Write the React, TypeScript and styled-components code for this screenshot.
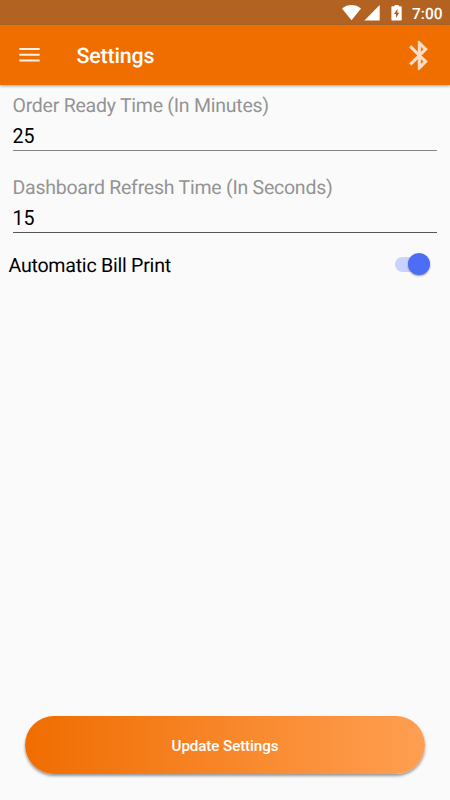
import React, { useState } from "react";
import styled, { createGlobalStyle } from "styled-components";

const GlobalStyle = createGlobalStyle`
  * { box-sizing: border-box; }
  body { margin: 0; background: #fafafa; font-family: Roboto, sans-serif; text-rendering: geometricPrecision; }
`;

const Screen = styled.div`
  display: flex;
  flex-direction: column;
  width: 450px;
  height: 800px;
  background: #fafafa;
  overflow: hidden;
`;

const StatusBar = styled.div`
  display: flex;
  align-items: center;
  flex: none;
  height: 25px;
  padding-left: 342px;
  background: #b26322;
  svg { display: block; flex: none; }
`;

const Clock = styled.span`
  margin-left: 10px;
  padding-top: 2px;
  color: #fff;
  font-size: 15.5px;
  font-weight: 500;
  line-height: 20px;
  white-space: nowrap;
`;

const AppBar = styled.header`
  display: flex;
  align-items: center;
  flex: none;
  height: 60px;
  padding: 0 13px 0 19px;
  background: #f06d00;
  box-shadow: 0 1px 3px rgba(50, 90, 100, 0.5);
`;

const IconButton = styled.button`
  display: flex;
  padding: 0;
  border: 0;
  background: none;
`;

const Title = styled.h1`
  flex: 1;
  margin: 3px 0 0 36.5px;
  color: #fff;
  font-size: 21.4px;
  font-weight: 500;
  letter-spacing: -0.15px;
  line-height: 28px;
`;

const Form = styled.main`
  flex: 1;
  padding: 8px 13px 0 12.5px;
`;

const Field = styled.label`
  display: flex;
  flex-direction: column;
  height: 82px;
`;

const FieldLabel = styled.span`
  padding-top: 1px;
  color: #949494;
  font-size: 19.5px;
  letter-spacing: -0.24px;
  line-height: 23px;
`;

const FieldInput = styled.input<{ $line: string }>`
  height: 34px;
  padding: 6px 0 0;
  border: 0;
  border-bottom: 1px solid ${(p) => p.$line};
  outline: 0;
  background: none;
  color: #000;
  font: 19.6px/27px Roboto, sans-serif;
  letter-spacing: -0.1px;
`;

const SwitchRow = styled.div`
  display: flex;
  align-items: center;
  justify-content: space-between;
  height: 30px;
  margin: -8px 7px 0 -4px;
  color: #000;
  font-size: 19.6px;
  letter-spacing: -0.25px;
`;

const SwitchLabel = styled.span`
  padding-top: 2px;
`;

const Track = styled.button<{ $on: boolean }>`
  display: flex;
  align-items: center;
  justify-content: ${(p) => (p.$on ? "flex-end" : "flex-start")};
  width: 35px;
  height: 15px;
  padding: 0;
  border: 0;
  border-radius: 8px;
  background: ${(p) => (p.$on ? "#c9d2fd" : "#bdbdbd")};
`;

const Thumb = styled.span<{ $on: boolean }>`
  flex: none;
  width: 22px;
  height: 22px;
  border-radius: 50%;
  background: ${(p) => (p.$on ? "#4d6df5" : "#fff")};
  box-shadow: 0 1px 2px rgba(0, 0, 0, 0.4);
`;

const UpdateButton = styled.button`
  flex: none;
  height: 58px;
  margin: 0 25px 26px;
  padding: 2px 0 0;
  border: 0;
  border-radius: 29px;
  background: linear-gradient(90deg, #f06d00, #ff9f52);
  box-shadow: 0 2px 3px rgba(0, 0, 0, 0.4);
  color: #fff;
  font: 500 15.2px/20px Roboto, sans-serif;
  letter-spacing: -0.1px;
`;

export default function App() {
  const [orderTime, setOrderTime] = useState("25");
  const [refreshTime, setRefreshTime] = useState("15");
  const [autoPrint, setAutoPrint] = useState(true);

  return (
    <>
      <GlobalStyle />
      <Screen>
        <StatusBar>
          <svg width="19" height="25" viewBox="0 0 19 25" fill="#fff">
            <path d="M0 8.5C5.5 3.9 13.5 3.9 19 8.5L9.5 20.3Z" />
          </svg>
          <svg width="30" height="25" viewBox="0 0 30 25" fill="#fff">
            <path d="M18.7 5V20.5H3.4Z" />
          </svg>
          <svg width="11" height="25" viewBox="0 0 11 25">
            <path d="M1 6.3H3.5V5H7.7V6.3H10Q10.7 6.3 10.7 7V19.7Q10.7 20.5 10 20.5H1.1Q.4 20.5 .4 19.7V7Q.4 6.3 1 6.3Z" fill="#fff" />
            <path d="M6.5 8.7L3 14.1H5V18L8.3 12.7H6.5Z" fill="#b26322" />
          </svg>
          <Clock>7:00</Clock>
        </StatusBar>
        <AppBar>
          <IconButton aria-label="Menu">
            <svg width="21" height="14" viewBox="0 0 21 14" fill="#fff" fillOpacity=".9">
              <path d="M.3 0H20.7V2H.3ZM.3 5.8H20.7V7.8H.3ZM.3 11.6H20.7V13.6H.3Z" />
            </svg>
          </IconButton>
          <Title>Settings</Title>
          <IconButton aria-label="Bluetooth">
            <svg width="34.8" height="34.8" viewBox="0 0 24 24" fill="#fddec5" stroke="#fddec5" strokeWidth=".2">
              <path d="M17.71 7.71L12 2h-1v7.59L6.41 5 5 6.41 10.59 12 5 17.59 6.41 19 11 14.41V22h1l5.71-5.71-4.3-4.29 4.3-4.29zM13 5.83l1.88 1.88L13 9.59V5.83zm1.88 10.46L13 18.17v-3.76l1.88 1.88z" />
            </svg>
          </IconButton>
        </AppBar>
        <Form>
          <Field>
            <FieldLabel>Order Ready Time (In Minutes)</FieldLabel>
            <FieldInput $line="#858585" value={orderTime} onChange={(e) => setOrderTime(e.target.value)} />
          </Field>
          <Field>
            <FieldLabel>Dashboard Refresh Time (In Seconds)</FieldLabel>
            <FieldInput $line="#555" value={refreshTime} onChange={(e) => setRefreshTime(e.target.value)} />
          </Field>
          <SwitchRow>
            <SwitchLabel>Automatic Bill Print</SwitchLabel>
            <Track role="switch" aria-checked={autoPrint} $on={autoPrint} onClick={() => setAutoPrint(!autoPrint)}>
              <Thumb $on={autoPrint} />
            </Track>
          </SwitchRow>
        </Form>
        <UpdateButton>Update Settings</UpdateButton>
      </Screen>
    </>
  );
}
